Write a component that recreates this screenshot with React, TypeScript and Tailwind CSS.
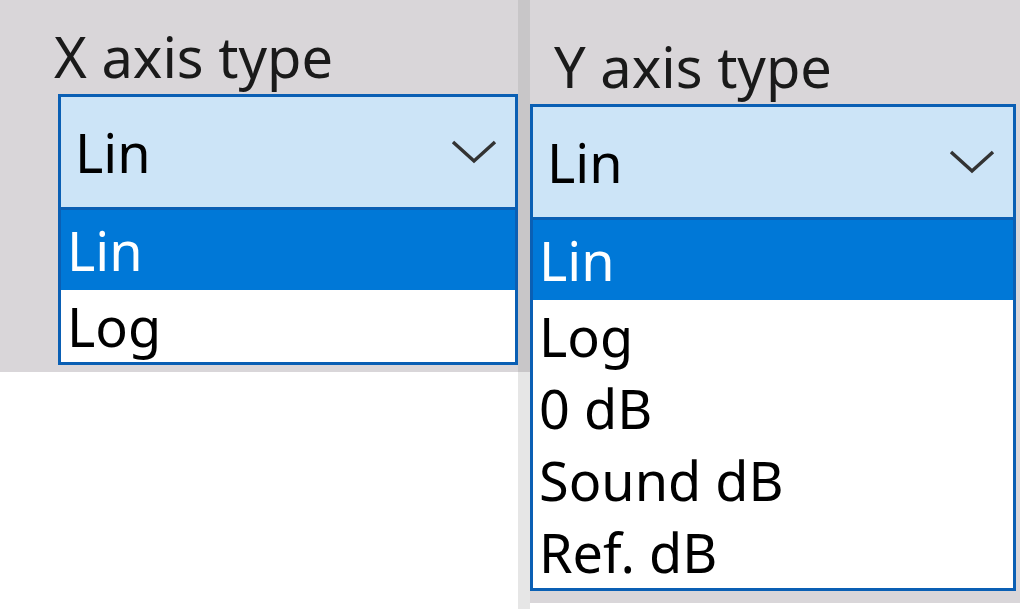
const Chevron = () => (
  <svg width="46" height="26" viewBox="0 0 46 26" fill="none" stroke="#333" strokeWidth="3.5">
    <path d="M2 3 L23 22 L44 3" />
  </svg>
);

const Combo = ({ label, items, labelPad }: { label: string; items: string[]; labelPad: string }) => (
  <div className="flex flex-col">
    <div className={`${labelPad} text-[56px] leading-none text-[#1a1a1a]`}>{label}</div>
    <div className="border-[3px] border-[#0a5fb4] bg-[#cce4f7]">
      <div className="flex h-[110px] items-center justify-between pl-[14px] pr-[18px]">
        <span className="text-[54px] text-black">Lin</span>
        <Chevron />
      </div>
      <div className="border-t-[3px] border-[#0a5fb4] bg-white">
        {items.map((it, i) => (
          <div
            key={it}
            className={`flex items-center pl-[6px] text-[54px] leading-none ${i === 0 ? "h-[80px] bg-[#0078d7] text-white" : "h-[72px] text-black"}`}
          >
            {it}
          </div>
        ))}
      </div>
    </div>
  </div>
);

export default function App() {
  return (
    <div className="flex h-[609px] w-[1024px] overflow-hidden bg-white" style={{ fontFamily: '"Noto Sans", "Open Sans", sans-serif' }}>
      <div className="flex w-[518px] flex-col">
        <div className="h-[372px] bg-[#d9d6d9] pl-[58px] pt-[28px]">
          <Combo label="X axis type" items={["Lin", "Log"]} labelPad="pb-[10px] -ml-[4px]" />
        </div>
        <div className="flex-1 bg-white" />
      </div>
      <div className="flex w-[12px] flex-col">
        <div className="h-[372px] bg-[#c8c6c8]" />
        <div className="flex-1 bg-[#e6e6e6]" />
      </div>
      <div className="h-[603px] w-[490px] bg-[#d9d6d9] pt-[38px]">
        <div className="w-[486px]">
          <Combo label="Y axis type" items={["Lin", "Log", "0 dB", "Sound dB", "Ref. dB"]} labelPad="pb-[10px] pl-[24px]" />
        </div>
      </div>
    </div>
  );
}
